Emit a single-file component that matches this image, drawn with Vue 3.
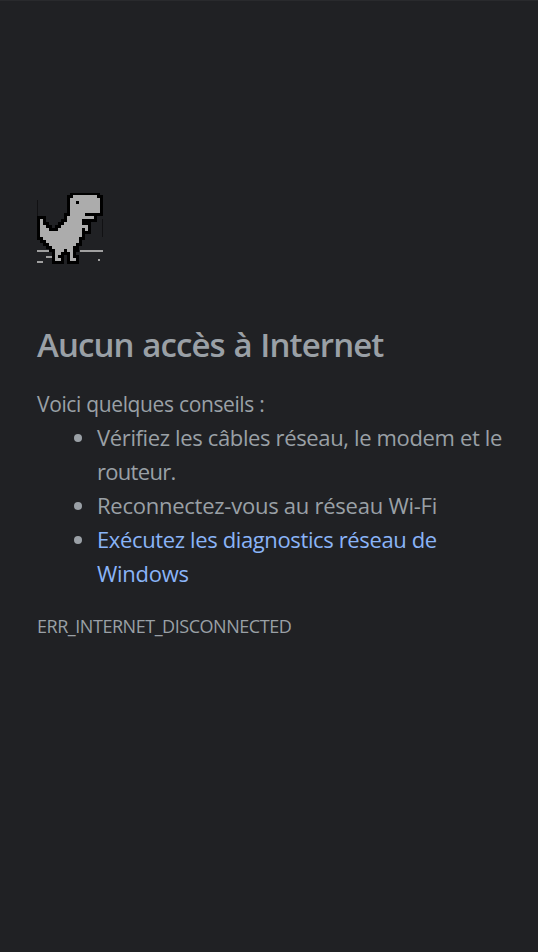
<script setup>
const rows = [
  '...........########.',
  '..........##########',
  '..........##.#######',
  '..........##########',
  '..........##########',
  '..........##########',
  '..........#####.....',
  '.........#########..',
  '#........#####......',
  '#.......######......',
  '##.....#########....',
  '###...########.#....',
  '##############......',
  '##############......',
  '.############.......',
  '..###########.......',
  '...#########........',
  '....#######.........',
  '.....###.##.........',
  '.....##...#.........',
  '.....#....#.........',
  '.....##...##........',
]
const cells = []
rows.forEach((row, y) => [...row].forEach((c, x) => {
  if (c === '#') cells.push([x + 1, y + 1])
}))
const outline = cells.map(([x, y]) => `M${x - 1} ${y - 1}h3v3h-3z`).join('')
const body = cells.map(([x, y]) => `M${x} ${y}h1v1h-1z`).join('')
</script>

<template>
  <main class="page">
    <svg class="dino" viewBox="0 0.3333 22 23.6667" shape-rendering="crispEdges" aria-hidden="true">
      <path d="M0 19.33h4v.67H0zM14.33 19.33H22v.67h-7.67zM3 21.33h3v.67H3zM0 23h2v.67H0zM20.33 22.33h.67v.67h-.67z" fill="#a0a0a0" />
      <path d="M0 2.7h.33v7H0zM21.67 9h.33v6h-.33z" fill="#111113" />
      <path d="M13 18h1v2h-1z" fill="#000" />
      <path :d="outline" fill="#000" />
      <path :d="body" fill="#acacac" />
    </svg>
    <h1><span class="t-title">Aucun accès à Internet</span></h1>
    <p class="intro"><span class="t-intro">Voici quelques conseils :</span></p>
    <ul>
      <li><span class="t-a">Vérifiez les câbles réseau, le modem et le</span><br /><span class="t-b">routeur.</span></li>
      <li><span class="t-c">Reconnectez-vous au réseau Wi-Fi</span></li>
      <li><a><span class="t-d">Exécutez les diagnostics réseau de</span><br /><span class="t-e">Windows</span></a></li>
    </ul>
    <p class="code"><span class="t-code">ERR_INTERNET_DISCONNECTED</span></p>
  </main>
</template>

<style>
body { background: #202124; }
</style>

<style scoped>
.page {
  box-sizing: border-box;
  min-height: 952px;
  padding: 192px 0 0 37px;
  border-top: 1px solid #292a2d;
  background: #202124;
  color: #9aa0a6;
  font-family: "Open Sans", "Noto Sans", sans-serif;
  font-size: 22px;
  line-height: 34px;
  white-space: nowrap;
}
.dino { display: block; width: 66px; height: 71px; }
h1 { margin: 60px 0 0; font-size: 33px; font-weight: 600; line-height: 42px; }
.intro { margin: 21px 0 0; font-size: 21px; }
ul { margin: -1px 0 0; padding: 0 0 0 60px; list-style: none; }
li { position: relative; }
li::before {
  content: "";
  position: absolute;
  left: -23px;
  top: 14px;
  width: 8px;
  height: 8px;
  border-radius: 50%;
  background: #9aa0a6;
}
a { color: #8ab4f8; }
.code { margin: 19px 0 0; font-size: 18px; }
.t-title { letter-spacing: -0.9px; word-spacing: 1px; }
.t-intro { letter-spacing: -0.38px; word-spacing: 0.3px; }
.t-a { letter-spacing: -0.36px; }
.t-b { letter-spacing: -0.7px; }
.t-c { letter-spacing: -0.25px; }
.t-d { letter-spacing: -0.37px; }
.t-e { letter-spacing: -0.25px; }
.t-code { letter-spacing: -0.46px; }
</style>
